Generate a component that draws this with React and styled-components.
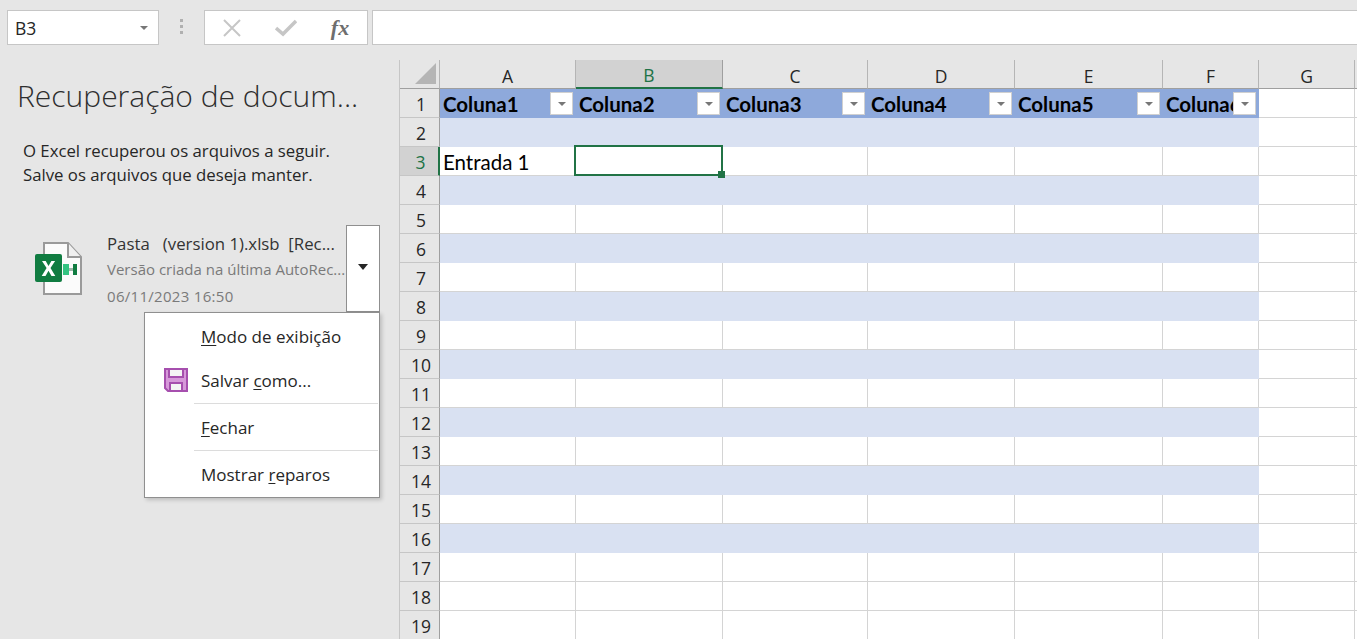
import React from 'react'
import styled, { createGlobalStyle } from 'styled-components'

const GlobalStyle = createGlobalStyle`
    html, body {
        margin: 0;
        height: 100%;
        overflow: hidden;
        background: #e6e6e6;
    }
`
const Page = styled.div`
    width: 1357px;
    height: 639px;
    overflow: hidden;
    display: flex;
    flex-direction: column;
    font-family: "Open Sans", "Noto Sans", sans-serif;
    color: #262626;
`
const FormulaBar = styled.div`
    flex: 0 0 60px;
    display: flex;
    align-items: flex-start;
    padding: 10px 0 0 7px;
    box-sizing: border-box;
`
const NameBox = styled.div`
    width: 152px;
    height: 35px;
    box-sizing: border-box;
    background: #fff;
    border: 1px solid #c6c6c6;
    display: flex;
    align-items: center;
    justify-content: space-between;
    padding: 0 10px 0 7px;
    font-size: 17.5px;
`
const Caret = styled.span`
    width: 0;
    height: 0;
    border-left: ${props => props.$size || 4}px solid transparent;
    border-right: ${props => props.$size || 4}px solid transparent;
    border-top: ${props => (props.$size ? props.$size + 1 : 4)}px solid ${props => props.color || '#777'};
`
const Grip = styled.div`
    width: 3px;
    margin: 9px 21px 0 21px;
    height: 16px;
    background: repeating-linear-gradient(#b0b0b0 0 3px, transparent 3px 6px);
`
const FormulaButtons = styled.div`
    width: 164px;
    height: 35px;
    box-sizing: border-box;
    background: #fff;
    border: 1px solid #c6c6c6;
    display: grid;
    grid-template-columns: repeat(3, 54px);
`
const FormulaButton = styled.span`
    display: flex;
    align-items: center;
    justify-content: center;
`
const FxLabel = styled.span`
    font-family: "Liberation Serif", serif;
    font-style: italic;
    font-weight: 700;
    font-size: 22px;
    color: #6e6e6e;
`
const FormulaInput = styled.div`
    flex: 1;
    height: 35px;
    margin-left: 4px;
    box-sizing: border-box;
    background: #fff;
    border: 1px solid #c6c6c6;
    border-right: 0;
`
const Body = styled.div`
    flex: 1;
    display: flex;
    min-height: 0;
`
const RecoveryPane = styled.aside`
    position: relative;
    flex: 0 0 399px;
    box-sizing: border-box;
    padding: 15px 0 0 17px;
`
const PaneTitle = styled.h1`
    margin: 0;
    font-weight: 300;
    font-size: 30px;
    line-height: 42px;
    letter-spacing: 0;
    color: #2e2e2e;
    white-space: nowrap;
`
const PaneIntro = styled.p`
    margin: 22px 0 0 6px;
    font-size: 16.800px;
    line-height: 24px;
    letter-spacing: -0.02px;
    color: #262626;
`
const FileRow = styled.div`
    display: flex;
    margin-top: 38px;
`
const FileIcon = styled.svg`
    flex: 0 0 auto;
    margin: 16px 0 0 18px;
`
const FileInfo = styled.div`
    width: 239px;
    margin-left: 24px;
    white-space: nowrap;
    padding-top: 7px;
`
const FileName = styled.div`
    font-size: 16.800px;
    line-height: 24px;
    white-space: pre;
    color: #333;
`
const FileMeta = styled.div`
    font-size: 15px;
    line-height: 27px;
    letter-spacing: ${props => props.$tracking || 0}px;
    color: #7a7a7a;
`
const DropButton = styled.div`
    width: 34px;
    height: 87px;
    box-sizing: border-box;
    background: #fff;
    border: 1px solid #8f8f8f;
    display: flex;
    align-items: center;
    justify-content: center;
    padding-bottom: 3px;
`
const Menu = styled.div`
    position: absolute;
    left: 144px;
    top: 252px;
    width: 236px;
    height: 186px;
    box-sizing: border-box;
    background: #fff;
    border: 1px solid #8f8f8f;
    box-shadow: 2px 2px 4px rgba(0, 0, 0, 0.18);
`
const MenuItem = styled.div`
    height: ${props => props.height}px;
    box-sizing: border-box;
    padding-bottom: ${props => props.$lift || 0}px;
    display: flex;
    align-items: center;
    font-size: 17px;
    color: #262626;
`
const MenuIconSlot = styled.div`
    flex: 0 0 56px;
    display: flex;
    justify-content: flex-end;
    padding-right: 13px;
    box-sizing: border-box;
`
const MenuDivider = styled.div`
    height: 1px;
    margin-left: 49px;
    margin-right: 1px;
    background: #dcdcdc;
`
const Key = styled.span`
    text-decoration: underline;
    text-underline-offset: 2px;
    text-decoration-thickness: 1px;
`
const Sheet = styled.div`
    flex: 1;
    display: grid;
    grid-template-columns: ${props => props.columns};
    grid-auto-rows: 29px;
    background: #fff;
    align-content: start;
    overflow: hidden;
    border-left: 1px solid #c6c6c6;
`
const Corner = styled.div`
    background: #e6e6e6;
    border-right: 1px solid #b5b5b5;
    border-bottom: 1px solid #9f9f9f;
    box-sizing: border-box;
    position: relative;
    &::after {
        content: "";
        position: absolute;
        right: 3px;
        bottom: 4px;
        border-left: 21px solid transparent;
        border-bottom: 21px solid #b5b5b5;
    }
`
const ColHeader = styled.div`
    box-sizing: border-box;
    display: flex;
    align-items: center;
    justify-content: center;
    font-size: 17.500px;
    padding-top: 3px;
    background: ${props => (props.$active ? '#d2d2d2' : '#e6e6e6')};
    color: ${props => (props.$active ? '#217346' : '#262626')};
    border-right: 1px solid ${props => (props.$active ? '#9f9f9f' : '#b5b5b5')};
    border-bottom: ${props => (props.$active ? '2px solid #217346' : '1px solid #9f9f9f')};
`
const RowHeader = styled.div`
    box-sizing: border-box;
    display: flex;
    align-items: center;
    justify-content: center;
    font-size: 17.500px;
    padding: 1px 0 0 3px;
    background: ${props => (props.$active ? '#d2d2d2' : '#e6e6e6')};
    color: ${props => (props.$active ? '#217346' : '#262626')};
    border-right: ${props => (props.$active ? '2px solid #217346' : '1px solid #9f9f9f')};
    border-bottom: 1px solid #c6c6c6;
`
const Cell = styled.div`
    position: relative;
    box-sizing: border-box;
    display: flex;
    align-items: center;
    padding: 1px 0 0 3px;
    overflow: hidden;
    white-space: nowrap;
    font-family: Lato, "Open Sans", sans-serif;
    font-size: 20.500px;
    font-weight: ${props => (props.$head ? 700 : 400)};
    color: #000;
    background: ${props => props.$bg};
    border-right: 1px solid ${props => (props.$bg === '#fff' ? '#d4d4d4' : props.$bg)};
    border-bottom: 1px solid ${props => (props.$bg === '#fff' ? '#d4d4d4' : props.$bg)};
`
const FilterButton = styled.span`
    position: absolute;
    right: 2px;
    top: 3px;
    width: 23px;
    height: 23px;
    box-sizing: border-box;
    background: #fff;
    border: 1px solid #d0d0d0;
    display: flex;
    align-items: center;
    justify-content: center;
`
const Selection = styled.div`
    position: absolute;
    inset: -2px -1px -1px -2px;
    border: 2px solid #217346;
    z-index: 2;
    &::after {
        content: "";
        position: absolute;
        right: -4px;
        bottom: -4px;
        width: 7px;
        height: 7px;
        background: #217346;
    }
`
const SelectedCell = styled(Cell)`
    overflow: visible;
    z-index: 2;
`

const columnLetters = ['A', 'B', 'C', 'D', 'E', 'F', 'G', '']
const colWidths = [136, 147, 145, 147, 148, 96, 96, 97]
const gridColumns = ['40px', ...colWidths.map(w => `${w}px`)].join(' ')
const rowCount = 19
const tableColumns = 6
const tableRows = 16

const cellBackground = (row, col) => {
    if (col >= tableColumns || row > tableRows) return '#fff'
    if (row === 1) return '#8ea9db'
    return row % 2 === 0 ? '#d9e1f2' : '#fff'
}

const ExcelFileIcon = () => (
    <FileIcon width="48" height="56" viewBox="0 0 48 56">
        <path d="M9 2h24l13 14v37H9z" fill="#fbfbfb" stroke="#9a9a9a" strokeWidth="2" />
        <path d="M33 2v14h13" fill="#f0f0f0" stroke="#9a9a9a" strokeWidth="2" />
        <rect x="0" y="13" width="27" height="28" rx="2" fill="#107c41" />
        <path d="M7 20l4.600 7L6.700 35h3.800l3-5.200 3 5.200h3.800l-4.800-8 4.600-7h-3.700l-2.900 4.900-2.800-4.900z" fill="#fff" />
        <rect x="28" y="23" width="6" height="11" fill="#33c481" />
        <rect x="34" y="27" width="4" height="3" fill="#9fb8aa" />
        <rect x="38" y="23" width="4" height="11" fill="#107c41" />
    </FileIcon>
)

const SaveIcon = () => (
    <svg width="24" height="24" viewBox="0 0 24 24">
        <path d="M1 1h22v22H4l-3-3z" fill="#d699d9" stroke="#a64fae" strokeWidth="2" />
        <rect x="5" y="1" width="14" height="8" fill="#f4f4f4" stroke="#a64fae" strokeWidth="2" />
        <rect x="6" y="15" width="12" height="8" fill="#f4f4f4" stroke="#a64fae" strokeWidth="2" />
    </svg>
)

const CrossIcon = () => (
    <svg width="20" height="20" viewBox="0 0 20 20">
        <path d="M2 2l16 16M18 2L2 18" stroke="#c6c6c6" strokeWidth="2" fill="none" />
    </svg>
)

const CheckIcon = () => (
    <svg width="22" height="18" viewBox="0 0 22 18">
        <path d="M1 9l7 6L21 2" stroke="#c6c6c6" strokeWidth="3.500" fill="none" />
    </svg>
)

const App = () => {
    const rows = Array.from({ length: rowCount }, (_, i) => i + 1)
    return (
        <Page>
            <GlobalStyle />
            <FormulaBar>
                <NameBox>
                    B3
                    <Caret />
                </NameBox>
                <Grip />
                <FormulaButtons>
                    <FormulaButton><CrossIcon /></FormulaButton>
                    <FormulaButton><CheckIcon /></FormulaButton>
                    <FormulaButton><FxLabel>fx</FxLabel></FormulaButton>
                </FormulaButtons>
                <FormulaInput />
            </FormulaBar>
            <Body>
                <RecoveryPane>
                    <PaneTitle>Recuperação de docum...</PaneTitle>
                    <PaneIntro>
                        O Excel recuperou os arquivos a seguir.
                        <br />
                        Salve os arquivos que deseja manter.
                    </PaneIntro>
                    <FileRow>
                        <ExcelFileIcon />
                        <FileInfo>
                            <FileName>Pasta   (version 1).xlsb  [Rec...</FileName>
                            <FileMeta>Versão criada na última AutoRec...</FileMeta>
                            <FileMeta $tracking={0.3}>06/11/2023 16:50</FileMeta>
                        </FileInfo>
                        <DropButton>
                            <Caret color="#262626" $size={5} />
                        </DropButton>
                    </FileRow>
                    <Menu>
                        <MenuItem height={46}>
                            <MenuIconSlot />
                            <span><Key>M</Key>odo de exibição</span>
                        </MenuItem>
                        <MenuItem height={44} $lift={2}>
                            <MenuIconSlot><SaveIcon /></MenuIconSlot>
                            <span>Salvar <Key>c</Key>omo...</span>
                        </MenuItem>
                        <MenuDivider />
                        <MenuItem height={46}>
                            <MenuIconSlot />
                            <span><Key>F</Key>echar</span>
                        </MenuItem>
                        <MenuDivider />
                        <MenuItem height={46}>
                            <MenuIconSlot />
                            <span>Mostrar <Key>r</Key>eparos</span>
                        </MenuItem>
                    </Menu>
                </RecoveryPane>
                <Sheet columns={gridColumns}>
                    <Corner />
                    {columnLetters.map((letter, col) => (
                        <ColHeader key={col} $active={letter === 'B'}>{letter}</ColHeader>
                    ))}
                    {rows.map(row => (
                        <React.Fragment key={row}>
                            <RowHeader $active={row === 3}>{row}</RowHeader>
                            {columnLetters.map((letter, col) => {
                                const bg = cellBackground(row, col)
                                const isHead = row === 1 && col < tableColumns
                                if (row === 3 && col === 1) {
                                    return (
                                        <SelectedCell key={col} $bg={bg}>
                                            <Selection />
                                        </SelectedCell>
                                    )
                                }
                                return (
                                    <Cell key={col} $bg={bg} $head={isHead}>
                                        {isHead && `Coluna${col + 1}`}
                                        {row === 3 && col === 0 && 'Entrada 1'}
                                        {isHead && <FilterButton><Caret /></FilterButton>}
                                    </Cell>
                                )
                            })}
                        </React.Fragment>
                    ))}
                </Sheet>
            </Body>
        </Page>
    )
}

export default App
